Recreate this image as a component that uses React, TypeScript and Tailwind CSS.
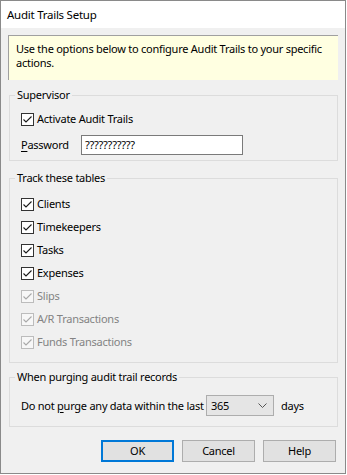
import React from "react";

function Check({ disabled }: { disabled?: boolean }) {
  return (
    <span
      className={
        "flex h-[13px] w-[13px] shrink-0 items-center justify-center border " +
        (disabled ? "border-[#bcbcbc] bg-[#f7f7f7]" : "border-[#333333] bg-white")
      }
    >
      <svg width="11" height="11" viewBox="0 0 11 11" fill="none">
        <path
          d="M1.5 5.5 L4 8 L9.5 2.5"
          stroke={disabled ? "#a8a8a8" : "#1a1a1a"}
          strokeWidth="1.1"
        />
      </svg>
    </span>
  );
}

function Row({ label, disabled }: { label: string; disabled?: boolean }) {
  return (
    <div className="flex h-[16px] items-center gap-[3px]">
      <Check disabled={disabled} />
      <span className={disabled ? "text-[#838383]" : "text-black"}>{label}</span>
    </div>
  );
}

const tables = [
  { label: "Clients" },
  { label: "Timekeepers" },
  { label: "Tasks" },
  { label: "Expenses" },
  { label: "Slips", disabled: true },
  { label: "A/R Transactions", disabled: true },
  { label: "Funds Transactions", disabled: true },
];

export default function App() {
  return (
    <div className="h-[475px] w-[347px] bg-white font-['Noto_Sans',sans-serif] text-[11px] leading-[16px] tracking-[-0.25px] text-black">
      <div className="flex h-[474px] w-[346px] flex-col border border-[#8a8a8a] bg-[#f0f0f0]">
        {/* Title bar */}
        <div className="flex h-[27px] items-center bg-white pl-[6px] text-[11.5px]">
          Audit Trails Setup
        </div>

        <div className="flex flex-col px-[7px]">
          {/* Info banner */}
          <div className="mt-[7px] h-[45px] whitespace-nowrap border-l border-t border-[#a0a0a0] bg-[#ffffe1] pl-[7px] pt-[6px] leading-[14px]">
            <div>Use the options below to configure Audit Trails to your specific</div>
            <div>actions.</div>
          </div>

          {/* Supervisor */}
          <fieldset className="ml-[1px] mt-[7px] border border-[#dcdcdc] pb-[5px] pl-[11px]">
            <legend className="ml-[-6px] px-[2px]">Supervisor</legend>
            <div className="mt-[8px]">
              <Row label="Activate Audit Trails" />
            </div>
            <div className="mt-[8px] flex h-[20px] items-center">
              <span className="w-[60px]">
                <u className="underline-offset-2">P</u>assword
              </span>
              <div className="flex h-[20px] w-[162px] items-center border border-[#7a7a7a] bg-white pl-[3px]">
                ???????????
              </div>
            </div>
          </fieldset>

          {/* Tables */}
          <fieldset className="ml-[1px] mt-[9px] border border-[#dcdcdc] pb-[12px] pl-[11px]">
            <legend className="ml-[-6px] px-[2px]">Track these tables</legend>
            <div className="mt-[10px] flex flex-col gap-[7px]">
              {tables.map((t) => (
                <Row key={t.label} label={t.label} disabled={t.disabled} />
              ))}
            </div>
          </fieldset>

          {/* Purge */}
          <fieldset className="ml-[1px] mt-[6px] border border-[#dcdcdc] pb-[10px] pl-[11px]">
            <legend className="ml-[-6px] px-[2px]">When purging audit trail records</legend>
            <div className="mt-[10px] flex h-[21px] items-center whitespace-nowrap">
              <span className="w-[185px]">
                Do not <u className="underline-offset-2">p</u>urge any data within the last
              </span>
              <div className="flex h-[21px] w-[68px] shrink-0 items-center justify-between border border-[#adadad] bg-[#e5e5e5] pl-[4px] pr-[6px]">
                <span>365</span>
                <svg width="9" height="6" viewBox="0 0 9 6" fill="none">
                  <path d="M0.5 0.5 L4.5 4.5 L8.5 0.5" stroke="#555555" strokeWidth="1" />
                </svg>
              </div>
              <span className="ml-[7px]">days</span>
            </div>
          </fieldset>

          {/* Buttons */}
          <div className="mt-[13px] flex justify-end gap-[8px] pr-[2px]">
            <button className="h-[22px] w-[73px] border-2 border-[#0078d7] bg-[#e1e1e1]">OK</button>
            <button className="h-[22px] w-[73px] border border-[#adadad] bg-[#e1e1e1]">Cancel</button>
            <button className="h-[22px] w-[73px] border border-[#adadad] bg-[#e1e1e1]">Help</button>
          </div>
        </div>
      </div>
    </div>
  );
}
